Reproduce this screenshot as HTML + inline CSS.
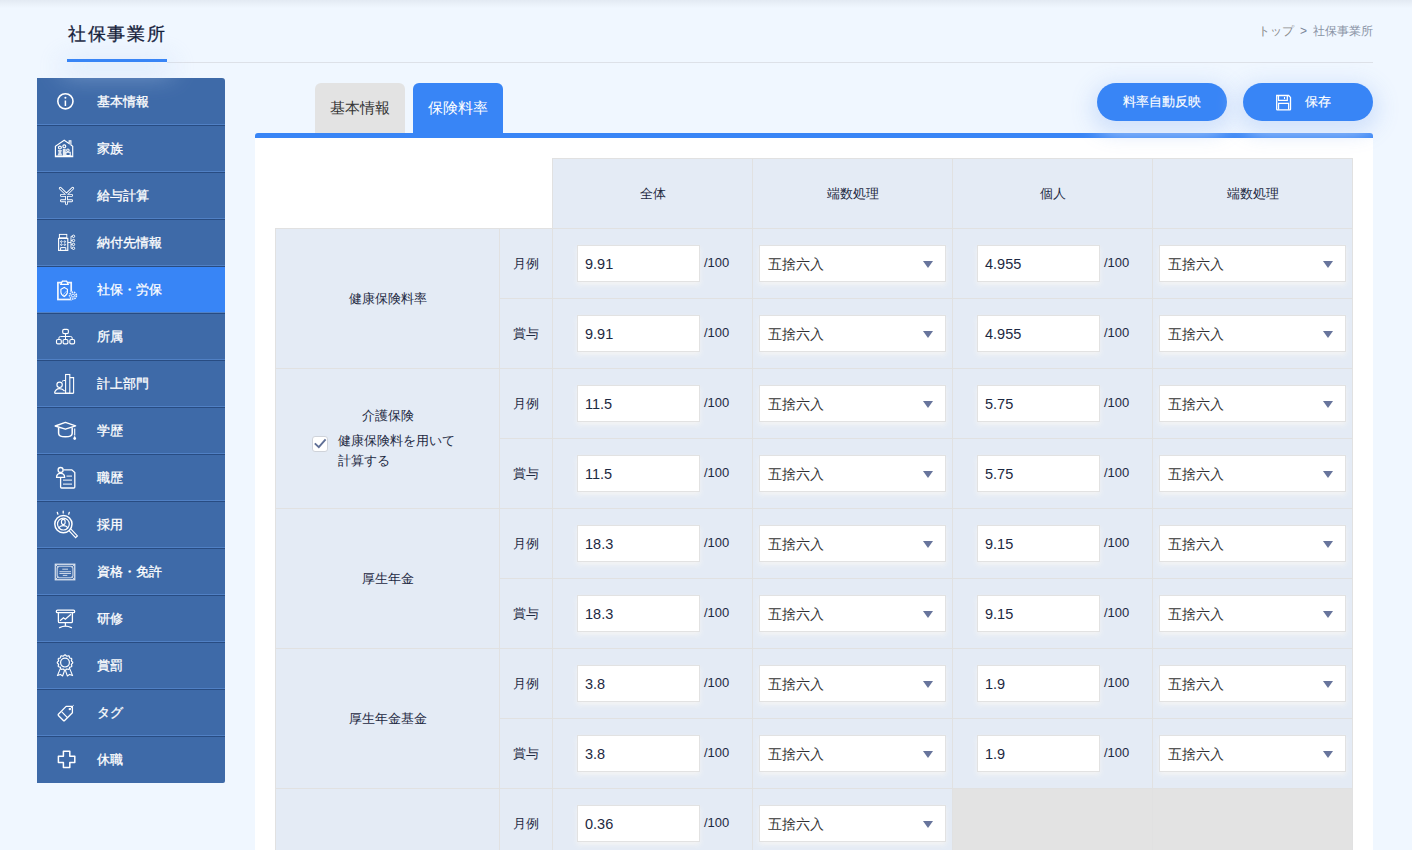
<!DOCTYPE html>
<html lang="ja">
<head>
<meta charset="utf-8">
<style>
*{box-sizing:border-box;margin:0;padding:0}
html,body{width:1412px;height:850px;overflow:hidden}
body{background:#f0f7ff;font-family:"Liberation Sans",sans-serif;color:#1d2942;position:relative}
.topshadow{position:absolute;left:0;top:0;width:1412px;height:8px;background:linear-gradient(#e3eaf3,rgba(240,247,255,0))}
.title{position:absolute;left:68px;top:21px;font-size:18px;letter-spacing:1.7px;color:#14203a;-webkit-text-stroke:.3px #14203a;line-height:26px;white-space:nowrap}
.uline{position:absolute;z-index:5;left:67px;top:59px;width:100px;height:3px;background:#3885f6;box-shadow:0 6px 26px 5px rgba(200,220,248,.65)}
.gline{position:absolute;left:167px;top:62px;width:1206px;height:1px;background:#dde1e8}
.crumb{position:absolute;right:39px;top:22px;font-size:12px;line-height:18px;color:#8a94a6;white-space:nowrap}
.crumb .t{color:#8b8b8b}
.crumb .g{color:#7a8499;margin:0 6px}

.side{position:absolute;left:37px;top:78px;width:188px;height:705px;background:#3e6aa8;border-radius:0 3px 2px 0;overflow:hidden;padding-top:1px}
.item:last-child{border-bottom:0;box-shadow:none;height:46px}
.item{position:relative;height:47px;border-bottom:1px solid #284c82;box-shadow:inset 0 -1px 0 #5080c4}
.item.act{background:#3885f6}
.item .lab{position:absolute;left:60px;top:0;line-height:46px;font-size:13px;font-weight:normal;-webkit-text-stroke:.3px #fff;color:#fff;white-space:nowrap}
.item svg{position:absolute;left:13px;top:0}

.tab{position:absolute;top:83px;height:50px;width:90px;border-radius:6px 6px 0 0;font-size:15px;line-height:50px;text-align:center}
.tab1{left:315px;background:#e3e3e3;color:#333}
.tab2{left:413px;background:#3885f6;color:#fff}
.bar{position:absolute;left:255px;top:133px;width:1118px;height:5px;background:#3885f6;border-radius:3px 3px 0 0}
.panel{position:absolute;left:255px;top:138px;width:1118px;height:712px;background:#fff}
.btn{position:absolute;top:83px;width:130px;height:38px;border-radius:19px;background:#3885f6;color:#fff;font-size:13px;font-weight:normal;-webkit-text-stroke:.15px #fff;line-height:38px;text-align:center;box-shadow:0 6px 20px 6px rgba(205,222,250,.85)}
.btn1{left:1097px}
.btn .fl{position:absolute;left:27px;top:0}
.btn2 .bt{position:absolute;left:62px;top:0}
.btn2{left:1243px}

.grid{position:absolute;left:275px;top:158px}
.cell{position:absolute;background:#e4ebf5;border:1px solid #e1e1e1;display:flex;align-items:center;justify-content:center;font-size:13px;color:#1d2942}
.cell.gray{background:#e3e3e3}
.inp{position:absolute;width:123px;height:37px;background:#fff;border:1px solid #e2e2e2;font-size:14.5px;line-height:36px;padding-left:7px;color:#1d2942;box-shadow:0 3px 5px rgba(244,244,244,1)}
.per{position:absolute;font-size:13px;line-height:35px;color:#1d2942;width:40px}
.sel{position:absolute;width:187px;height:37px;background:#fff;border:1px solid #e2e2e2;font-size:14px;line-height:36px;padding-left:8px;color:#333;box-shadow:0 3px 5px rgba(244,244,244,1)}
.sel i{position:absolute;right:12px;top:15px;width:0;height:0;border-left:5px solid transparent;border-right:5px solid transparent;border-top:7px solid #67749c}
.kaigo{position:relative;width:100%;height:100%}
.k1{position:absolute;left:0;width:100%;text-align:center;top:38px;line-height:18px}
.k2{position:absolute;left:36px;top:62px}
.cb{position:absolute;left:0;top:5px;width:16px;height:16px;border:1px solid #cfd3da;border-radius:3px;background:#fff}
.cb svg{position:absolute;left:0;top:0;overflow:visible}
.kt{position:absolute;left:26px;top:0;line-height:20px;white-space:nowrap}
</style>
</head>
<body>
<div class="topshadow"></div>
<div class="title">社保事業所</div>
<div class="uline"></div>
<div class="gline"></div>
<div class="crumb"><span class="t">トップ</span><span class="g">&gt;</span>社保事業所</div>

<div class="side">
 <div class="item"><svg viewBox="50 79 30 47" width="30" height="47" fill="none" stroke="#fff"><circle cx="65.4" cy="101.3" r="7.6" stroke-width="1.6"/><circle cx="65.4" cy="97.7" r="1.05" fill="#fff" stroke="none"/><path d="M65.4 100.6 V106" stroke-width="1.5"/></svg><span class="lab">基本情報</span></div>
 <div class="item"><svg viewBox="50 126 30 47" width="30" height="47" fill="none" stroke="#fff"><path d="M55.4 156.6 V146.3 L64.2 140.3 L69.2 143.7 V140.7 H70.9 V144.9 L72.7 146.2 V156.6 Z" stroke-width="1.15" stroke-linejoin="miter"/>
<circle cx="59.9" cy="147.5" r="1.45" stroke-width="1.2"/><path d="M57.6 155.6 L58.6 152.6 L57.8 150.1 H62 L61.2 152.6 L62.2 155.6 Z" fill="#fff" fill-opacity=".8" stroke="none"/>
<circle cx="64.3" cy="146.3" r="1.45" stroke-width="1.2"/><path d="M62.8 156 V148.8 H65.7 V156 Z" fill="#fff" fill-opacity=".85" stroke="none"/>
<circle cx="67.9" cy="150.2" r="1.25" stroke-width="1.1"/><path d="M65.9 155.6 V152.2 H70.2 V155.6 Z" stroke-width="1.1"/>
<path d="M56 156 H72" stroke-width="1.1"/></svg><span class="lab">家族</span></div>
 <div class="item"><svg viewBox="50 173 30 47" width="30" height="47" fill="none" stroke="#fff"><g stroke-linecap="round" stroke-linejoin="round"><path d="M60.3 188.3 L66.5 194.3 L72.7 188.3 M66.5 194.3 V203.8 M61.4 195.4 H71.6 M61.4 200.7 H71.6" stroke-width="2.9"/><path d="M60.3 188.3 L66.5 194.3 L72.7 188.3 M66.5 194.3 V203.8 M61.4 195.4 H71.6 M61.4 200.7 H71.6" stroke="#3e6aa8" stroke-width="1.15"/></g></svg><span class="lab">給与計算</span></div>
 <div class="item"><svg viewBox="50 220 30 47" width="30" height="47" fill="none" stroke="#fff"><rect x="59.4" y="234.4" width="7.4" height="3.4" stroke-width="0.95"/><rect x="58.6" y="238.4" width="9.2" height="12" stroke-width="1.15"/>
<circle cx="61.4" cy="241.6" r="0.8" stroke-width="0.9"/><circle cx="64.8" cy="241.6" r="0.8" stroke-width="0.9"/><circle cx="61.4" cy="244.6" r="0.8" stroke-width="0.9"/><circle cx="64.8" cy="244.6" r="0.8" stroke-width="0.9"/>
<path d="M60.6 250 V247.6 H65.8 V250" stroke-width="1"/>
<path d="M68 242.5 H71 M71 236.3 V248.3 M71 236.3 H72.3 M71 240.5 H72.3 M71 244.4 H72.3 M71 248.3 H72.3" stroke-width="0.9"/>
<circle cx="73.5" cy="236.3" r="1.2" stroke-width="1"/><circle cx="73.5" cy="240.5" r="1.2" stroke-width="1"/><circle cx="73.5" cy="244.4" r="1.2" stroke-width="1"/><circle cx="73.5" cy="248.3" r="1.2" stroke-width="1"/></svg><span class="lab">納付先情報</span></div>
 <div class="item act"><svg viewBox="50 267 30 47" width="30" height="47" fill="none" stroke="#fff"><rect x="57.9" y="282.6" width="13.3" height="16.9" stroke-width="1.7" stroke-opacity=".92"/><path d="M60.8 284.3 L62.4 281.2 H66.6 L68.2 284.3 Z" stroke-width="1.2" fill="#3885f6"/>
<path d="M64.2 287.4 L60.9 289.3 V292.2 C60.9 294.6 64.2 296.5 64.2 296.5 C64.2 296.5 67.4 294.6 67.4 292.2 V289.3 Z" stroke-width="1.1"/>
<circle cx="73" cy="295.6" r="4.3" fill="#3885f6" stroke="none"/><circle cx="73" cy="295.6" r="3.4" stroke-width="1.7" stroke-dasharray="1.5 0.85" stroke-opacity=".9"/><circle cx="73" cy="295.6" r="1.5" stroke-width="0.9"/><path d="M64.2 296.3 L67 293.2 M63.2 294.8 L66.6 291" stroke-width="0.8" stroke-opacity=".7"/></svg><span class="lab">社保・労保</span></div>
 <div class="item"><svg viewBox="50 314 30 47" width="30" height="47" fill="none" stroke="#fff"><rect x="62.7" y="329.3" width="5.7" height="4.4" rx="1.4" stroke-width="1.15"/><rect x="56.5" y="339.5" width="4.8" height="4.3" rx="1.3" stroke-width="1.15"/><rect x="63.1" y="339.5" width="4.8" height="4.3" rx="1.3" stroke-width="1.15"/><rect x="69.8" y="339.5" width="4.8" height="4.3" rx="1.3" stroke-width="1.15"/>
<path d="M58.9 339.5 V338 Q58.9 336.5 60.4 336.5 H70.7 Q72.2 336.5 72.2 338 V339.5 M65.5 333.7 V339.5" stroke-width="1"/></svg><span class="lab">所属</span></div>
 <div class="item"><svg viewBox="50 361 30 47" width="30" height="47" fill="none" stroke="#fff"><circle cx="59.6" cy="384.8" r="2.7" stroke-width="1.15"/><path d="M54.6 393.3 C54.6 390.6 57 388.7 59.5 388.7 C61.8 388.7 63.4 389.7 64.6 391.2" stroke-width="1.2"/>
<path d="M54.6 393.3 H73.6" stroke-width="1.3"/><rect x="65.6" y="374.5" width="4.2" height="18.8" stroke-width="1.1"/><path d="M69.8 377.6 H73.6 V393.3" stroke-width="1.1"/>
<path d="M62 381.3 Q63 380.4 65.5 380.4" stroke-width="1"/></svg><span class="lab">計上部門</span></div>
 <div class="item"><svg viewBox="50 408 30 47" width="30" height="47" fill="none" stroke="#fff"><path d="M55.2 426 L65.4 422.4 L75.6 425.8 L65.4 429.2 Z" stroke-width="1.4" stroke-linejoin="round"/><path d="M58.6 427.6 V433.2 Q58.6 436.8 65.4 436.8 Q72.2 436.8 72.2 433.2 V427.6" stroke-width="1.5"/>
<path d="M74.7 428.6 V435.4" stroke-width="1.1"/><path d="M74.7 435.8 Q73.3 437.8 73.3 438.6 A1.4 1.4 0 0 0 76.1 438.6 Q76.1 437.8 74.7 435.8 Z" fill="#fff" stroke="none"/></svg><span class="lab">学歴</span></div>
 <div class="item"><svg viewBox="50 455 30 47" width="30" height="47" fill="none" stroke="#fff"><path d="M60.6 477.6 V487 Q60.6 488 61.6 488 H73.8 Q74.8 488 74.8 487 V472.6 L71.8 469.8 H63.4" stroke-width="1.3"/>
<circle cx="60.6" cy="470" r="2.5" stroke-width="1.3"/><path d="M56.6 477.3 C56.6 474.6 58.4 473.3 60.6 473.3 C62.8 473.3 64.6 474.6 64.6 477.3 Z" stroke-width="1.3"/>
<path d="M66.5 476.2 H72 M63 480.2 H72 M63 484.1 H72" stroke-width="1.2" stroke-opacity=".8"/></svg><span class="lab">職歴</span></div>
 <div class="item"><svg viewBox="50 502 30 47" width="30" height="47" fill="none" stroke="#fff"><circle cx="63.4" cy="524.1" r="8.6" stroke-width="1.5"/><circle cx="63.4" cy="524.1" r="5.9" stroke-width="1.2"/>
<ellipse cx="63.3" cy="522" rx="1.9" ry="2.6" stroke-width="1.1"/><path d="M58.6 528.3 Q60 525.6 63.3 525.6 Q66.6 525.6 68.1 528.3" stroke-width="1.1"/>
<path d="M69.2 530.9 L75.6 537.7 L77.4 535.9 L71 529.1" stroke-width="1.2"/>
<path d="M57.3 512.3 L57.9 514.2 M63.2 511.2 V513 M69.3 512.3 L68.7 514.2" stroke-width="1.3" stroke-linecap="round"/></svg><span class="lab">採用</span></div>
 <div class="item"><svg viewBox="50 549 30 47" width="30" height="47" fill="none" stroke="#fff"><g stroke-opacity=".72"><rect x="55.4" y="564.3" width="19.3" height="15.4" stroke-width="1.5"/><path d="M58.9 566.2 H71.1 L72.9 568 V576 L71.1 577.8 H58.9 L57.2 576 V568 Z" stroke-width="1.1"/>
<path d="M55.6 564.5 L57.9 566.9 M74.5 564.5 L72.2 566.9 M55.6 579.5 L57.9 577.1 M74.5 579.5 L72.2 577.1" stroke-width="1"/>
<path d="M62.3 569.2 H68 M59.4 571.7 H71 M59.4 573.5 H71 M62.8 575.4 H67.3" stroke-width="1"/></g></svg><span class="lab">資格・免許</span></div>
 <div class="item"><svg viewBox="50 596 30 47" width="30" height="47" fill="none" stroke="#fff"><rect x="56.3" y="610.1" width="18.4" height="2.6" rx="1.3" stroke-width="1.3"/><path d="M58.4 612.7 V621.5 Q58.4 622.7 59.6 622.7 H71.2 Q72.4 622.7 72.4 621.5 V612.7" stroke-width="1.3"/>
<path d="M60 620.8 L63.5 617.8 L65.3 619.2 L71 614.2" stroke-width="1.2"/><path d="M65.4 622.7 V626.2" stroke-width="1.3"/><path d="M59.6 627.6 Q65.4 624.6 71.4 627.6" stroke-width="1.4" stroke-linecap="round"/></svg><span class="lab">研修</span></div>
 <div class="item"><svg viewBox="50 643 30 47" width="30" height="47" fill="none" stroke="#fff"><path d="M65.00 654.85 L65.50 655.03 L65.94 655.46 L66.33 655.92 L66.72 656.18 L67.19 656.15 L67.76 655.95 L68.36 655.79 L68.88 655.89 L69.22 656.29 L69.38 656.89 L69.49 657.48 L69.70 657.90 L70.12 658.11 L70.71 658.22 L71.31 658.38 L71.71 658.73 L71.81 659.24 L71.65 659.84 L71.45 660.41 L71.42 660.88 L71.68 661.27 L72.14 661.66 L72.57 662.10 L72.75 662.60 L72.57 663.10 L72.14 663.54 L71.68 663.93 L71.42 664.32 L71.45 664.79 L71.65 665.36 L71.81 665.96 L71.71 666.48 L71.31 666.82 L70.71 666.98 L70.12 667.09 L69.70 667.30 L69.49 667.72 L69.38 668.31 L69.22 668.91 L68.88 669.31 L68.36 669.41 L67.76 669.25 L67.19 669.05 L66.72 669.02 L66.33 669.28 L65.94 669.74 L65.50 670.17 L65.00 670.35 L64.50 670.17 L64.06 669.74 L63.67 669.28 L63.28 669.02 L62.81 669.05 L62.24 669.25 L61.64 669.41 L61.12 669.31 L60.78 668.91 L60.62 668.31 L60.51 667.72 L60.30 667.30 L59.88 667.09 L59.29 666.98 L58.69 666.82 L58.29 666.48 L58.19 665.96 L58.35 665.36 L58.55 664.79 L58.58 664.32 L58.32 663.93 L57.86 663.54 L57.43 663.10 L57.25 662.60 L57.43 662.10 L57.86 661.66 L58.32 661.27 L58.58 660.88 L58.55 660.41 L58.35 659.84 L58.19 659.24 L58.29 658.73 L58.69 658.38 L59.29 658.22 L59.88 658.11 L60.30 657.90 L60.51 657.48 L60.62 656.89 L60.78 656.29 L61.12 655.89 L61.64 655.79 L62.24 655.95 L62.81 656.15 L63.28 656.18 L63.67 655.92 L64.06 655.46 L64.50 655.03 L65.00 654.85Z" stroke-width="1.2"/><circle cx="65" cy="662.6" r="4.4" stroke-width="1.2"/>
<path d="M60.4 668.4 L57.4 675.6 L60.4 674.4 L62.6 676 L64.6 670.4 M69.6 668.4 L72.6 675.6 L69.6 674.4 L67.4 676 L65.4 670.4" stroke-width="1.1" stroke-linejoin="round"/></svg><span class="lab">賞罰</span></div>
 <div class="item"><svg viewBox="50 690 30 47" width="30" height="47" fill="none" stroke="#fff"><path d="M58.4 714.3 L66.1 706.4 H72.4 V712.7 L64.6 720.5 Q64 721.1 63.4 720.5 L58.4 715.5 Q57.8 714.9 58.4 714.3 Z" stroke-width="1.3" stroke-linejoin="round"/>
<path d="M61.8 711.9 L67.2 717.3" stroke-width="1.2"/><circle cx="69.8" cy="709.1" r="1.2" fill="#fff" stroke="none"/><path d="M70.2 708.7 L73.6 705.3" stroke-width="1"/></svg><span class="lab">タグ</span></div>
 <div class="item"><svg viewBox="50 737 30 47" width="30" height="47" fill="none" stroke="#fff"><path d="M63.4 751.3 H69.8 V756.2 H74.8 V762.5 H69.8 V767.4 H63.4 V762.5 H58.4 V756.2 H63.4 Z" stroke-width="1.5" stroke-linejoin="round"/></svg><span class="lab">休職</span></div>
</div>

<div class="panel"></div>
<div class="tab tab1">基本情報</div>
<div class="tab tab2">保険料率</div>
<div class="bar"></div>
<!--GRID-->
<div class="cell hd" style="left:552px;top:158px;width:201px;height:71px"><span>全体</span></div>
<div class="cell hd" style="left:752px;top:158px;width:201px;height:71px"><span>端数処理</span></div>
<div class="cell hd" style="left:952px;top:158px;width:201px;height:71px"><span>個人</span></div>
<div class="cell hd" style="left:1152px;top:158px;width:201px;height:71px"><span>端数処理</span></div>
<div class="cell catc" style="left:275px;top:228px;width:225px;height:141px"><span class="cat">健康保険料率</span></div>
<div class="cell sub" style="left:499px;top:228px;width:54px;height:71px"><span>月例</span></div>
<div class="cell" style="left:552px;top:228px;width:201px;height:71px"></div>
<div class="cell" style="left:752px;top:228px;width:201px;height:71px"></div>
<div class="inp" style="left:577px;top:245px">9.91</div>
<div class="per" style="left:704px;top:245px">/100</div>
<div class="sel" style="left:759px;top:245px"><span>五捨六入</span><i></i></div>
<div class="cell" style="left:952px;top:228px;width:201px;height:71px"></div>
<div class="cell" style="left:1152px;top:228px;width:201px;height:71px"></div>
<div class="inp" style="left:977px;top:245px">4.955</div>
<div class="per" style="left:1104px;top:245px">/100</div>
<div class="sel" style="left:1159px;top:245px"><span>五捨六入</span><i></i></div>
<div class="cell sub" style="left:499px;top:298px;width:54px;height:71px"><span>賞与</span></div>
<div class="cell" style="left:552px;top:298px;width:201px;height:71px"></div>
<div class="cell" style="left:752px;top:298px;width:201px;height:71px"></div>
<div class="inp" style="left:577px;top:315px">9.91</div>
<div class="per" style="left:704px;top:315px">/100</div>
<div class="sel" style="left:759px;top:315px"><span>五捨六入</span><i></i></div>
<div class="cell" style="left:952px;top:298px;width:201px;height:71px"></div>
<div class="cell" style="left:1152px;top:298px;width:201px;height:71px"></div>
<div class="inp" style="left:977px;top:315px">4.955</div>
<div class="per" style="left:1104px;top:315px">/100</div>
<div class="sel" style="left:1159px;top:315px"><span>五捨六入</span><i></i></div>
<div class="cell catc" style="left:275px;top:368px;width:225px;height:141px"><div class="kaigo"><div class="k1">介護保険</div><div class="k2"><span class="cb"><svg width="14" height="14" viewBox="0 0 14 14"><path d="M1.8 6.4 L5.8 10.2 L12.6 2.4" fill="none" stroke="#5f6f96" stroke-width="1.9"/></svg></span><span class="kt">健康保険料を用いて<br>計算する</span></div></div></div>
<div class="cell sub" style="left:499px;top:368px;width:54px;height:71px"><span>月例</span></div>
<div class="cell" style="left:552px;top:368px;width:201px;height:71px"></div>
<div class="cell" style="left:752px;top:368px;width:201px;height:71px"></div>
<div class="inp" style="left:577px;top:385px">11.5</div>
<div class="per" style="left:704px;top:385px">/100</div>
<div class="sel" style="left:759px;top:385px"><span>五捨六入</span><i></i></div>
<div class="cell" style="left:952px;top:368px;width:201px;height:71px"></div>
<div class="cell" style="left:1152px;top:368px;width:201px;height:71px"></div>
<div class="inp" style="left:977px;top:385px">5.75</div>
<div class="per" style="left:1104px;top:385px">/100</div>
<div class="sel" style="left:1159px;top:385px"><span>五捨六入</span><i></i></div>
<div class="cell sub" style="left:499px;top:438px;width:54px;height:71px"><span>賞与</span></div>
<div class="cell" style="left:552px;top:438px;width:201px;height:71px"></div>
<div class="cell" style="left:752px;top:438px;width:201px;height:71px"></div>
<div class="inp" style="left:577px;top:455px">11.5</div>
<div class="per" style="left:704px;top:455px">/100</div>
<div class="sel" style="left:759px;top:455px"><span>五捨六入</span><i></i></div>
<div class="cell" style="left:952px;top:438px;width:201px;height:71px"></div>
<div class="cell" style="left:1152px;top:438px;width:201px;height:71px"></div>
<div class="inp" style="left:977px;top:455px">5.75</div>
<div class="per" style="left:1104px;top:455px">/100</div>
<div class="sel" style="left:1159px;top:455px"><span>五捨六入</span><i></i></div>
<div class="cell catc" style="left:275px;top:508px;width:225px;height:141px"><span class="cat">厚生年金</span></div>
<div class="cell sub" style="left:499px;top:508px;width:54px;height:71px"><span>月例</span></div>
<div class="cell" style="left:552px;top:508px;width:201px;height:71px"></div>
<div class="cell" style="left:752px;top:508px;width:201px;height:71px"></div>
<div class="inp" style="left:577px;top:525px">18.3</div>
<div class="per" style="left:704px;top:525px">/100</div>
<div class="sel" style="left:759px;top:525px"><span>五捨六入</span><i></i></div>
<div class="cell" style="left:952px;top:508px;width:201px;height:71px"></div>
<div class="cell" style="left:1152px;top:508px;width:201px;height:71px"></div>
<div class="inp" style="left:977px;top:525px">9.15</div>
<div class="per" style="left:1104px;top:525px">/100</div>
<div class="sel" style="left:1159px;top:525px"><span>五捨六入</span><i></i></div>
<div class="cell sub" style="left:499px;top:578px;width:54px;height:71px"><span>賞与</span></div>
<div class="cell" style="left:552px;top:578px;width:201px;height:71px"></div>
<div class="cell" style="left:752px;top:578px;width:201px;height:71px"></div>
<div class="inp" style="left:577px;top:595px">18.3</div>
<div class="per" style="left:704px;top:595px">/100</div>
<div class="sel" style="left:759px;top:595px"><span>五捨六入</span><i></i></div>
<div class="cell" style="left:952px;top:578px;width:201px;height:71px"></div>
<div class="cell" style="left:1152px;top:578px;width:201px;height:71px"></div>
<div class="inp" style="left:977px;top:595px">9.15</div>
<div class="per" style="left:1104px;top:595px">/100</div>
<div class="sel" style="left:1159px;top:595px"><span>五捨六入</span><i></i></div>
<div class="cell catc" style="left:275px;top:648px;width:225px;height:141px"><span class="cat">厚生年金基金</span></div>
<div class="cell sub" style="left:499px;top:648px;width:54px;height:71px"><span>月例</span></div>
<div class="cell" style="left:552px;top:648px;width:201px;height:71px"></div>
<div class="cell" style="left:752px;top:648px;width:201px;height:71px"></div>
<div class="inp" style="left:577px;top:665px">3.8</div>
<div class="per" style="left:704px;top:665px">/100</div>
<div class="sel" style="left:759px;top:665px"><span>五捨六入</span><i></i></div>
<div class="cell" style="left:952px;top:648px;width:201px;height:71px"></div>
<div class="cell" style="left:1152px;top:648px;width:201px;height:71px"></div>
<div class="inp" style="left:977px;top:665px">1.9</div>
<div class="per" style="left:1104px;top:665px">/100</div>
<div class="sel" style="left:1159px;top:665px"><span>五捨六入</span><i></i></div>
<div class="cell sub" style="left:499px;top:718px;width:54px;height:71px"><span>賞与</span></div>
<div class="cell" style="left:552px;top:718px;width:201px;height:71px"></div>
<div class="cell" style="left:752px;top:718px;width:201px;height:71px"></div>
<div class="inp" style="left:577px;top:735px">3.8</div>
<div class="per" style="left:704px;top:735px">/100</div>
<div class="sel" style="left:759px;top:735px"><span>五捨六入</span><i></i></div>
<div class="cell" style="left:952px;top:718px;width:201px;height:71px"></div>
<div class="cell" style="left:1152px;top:718px;width:201px;height:71px"></div>
<div class="inp" style="left:977px;top:735px">1.9</div>
<div class="per" style="left:1104px;top:735px">/100</div>
<div class="sel" style="left:1159px;top:735px"><span>五捨六入</span><i></i></div>
<div class="cell catc" style="left:275px;top:788px;width:225px;height:113px"><span class="cat"></span></div>
<div class="cell sub" style="left:499px;top:788px;width:54px;height:71px"><span>月例</span></div>
<div class="cell" style="left:552px;top:788px;width:201px;height:71px"></div>
<div class="cell" style="left:752px;top:788px;width:201px;height:71px"></div>
<div class="inp" style="left:577px;top:805px">0.36</div>
<div class="per" style="left:704px;top:805px">/100</div>
<div class="sel" style="left:759px;top:805px"><span>五捨六入</span><i></i></div>
<div class="cell gray" style="left:952px;top:788px;width:201px;height:71px"></div>
<div class="cell gray" style="left:1152px;top:788px;width:201px;height:71px"></div>
<!--/GRID-->
<div class="btn btn1">料率自動反映</div>
<div class="btn btn2"><svg class="fl" viewBox="1270 83 30 38" width="30" height="38" fill="none" stroke="#fff"><path d="M1276.7 95.5 H1288.6 L1290.5 97.4 V109.3 Q1290.5 109.9 1289.9 109.9 H1277.3 Q1276.7 109.9 1276.7 109.3 Z" stroke-width="1.3"/><path d="M1278.5 95.5 V100.3 H1287.3 V95.5" stroke-width="1.2"/><path d="M1284.5 97 V99" stroke-width="1.1"/><path d="M1278.6 109.6 V103.4 H1288.6 V109.6" stroke-width="1.2"/></svg><span class="bt">保存</span></div>

</body>
</html>
